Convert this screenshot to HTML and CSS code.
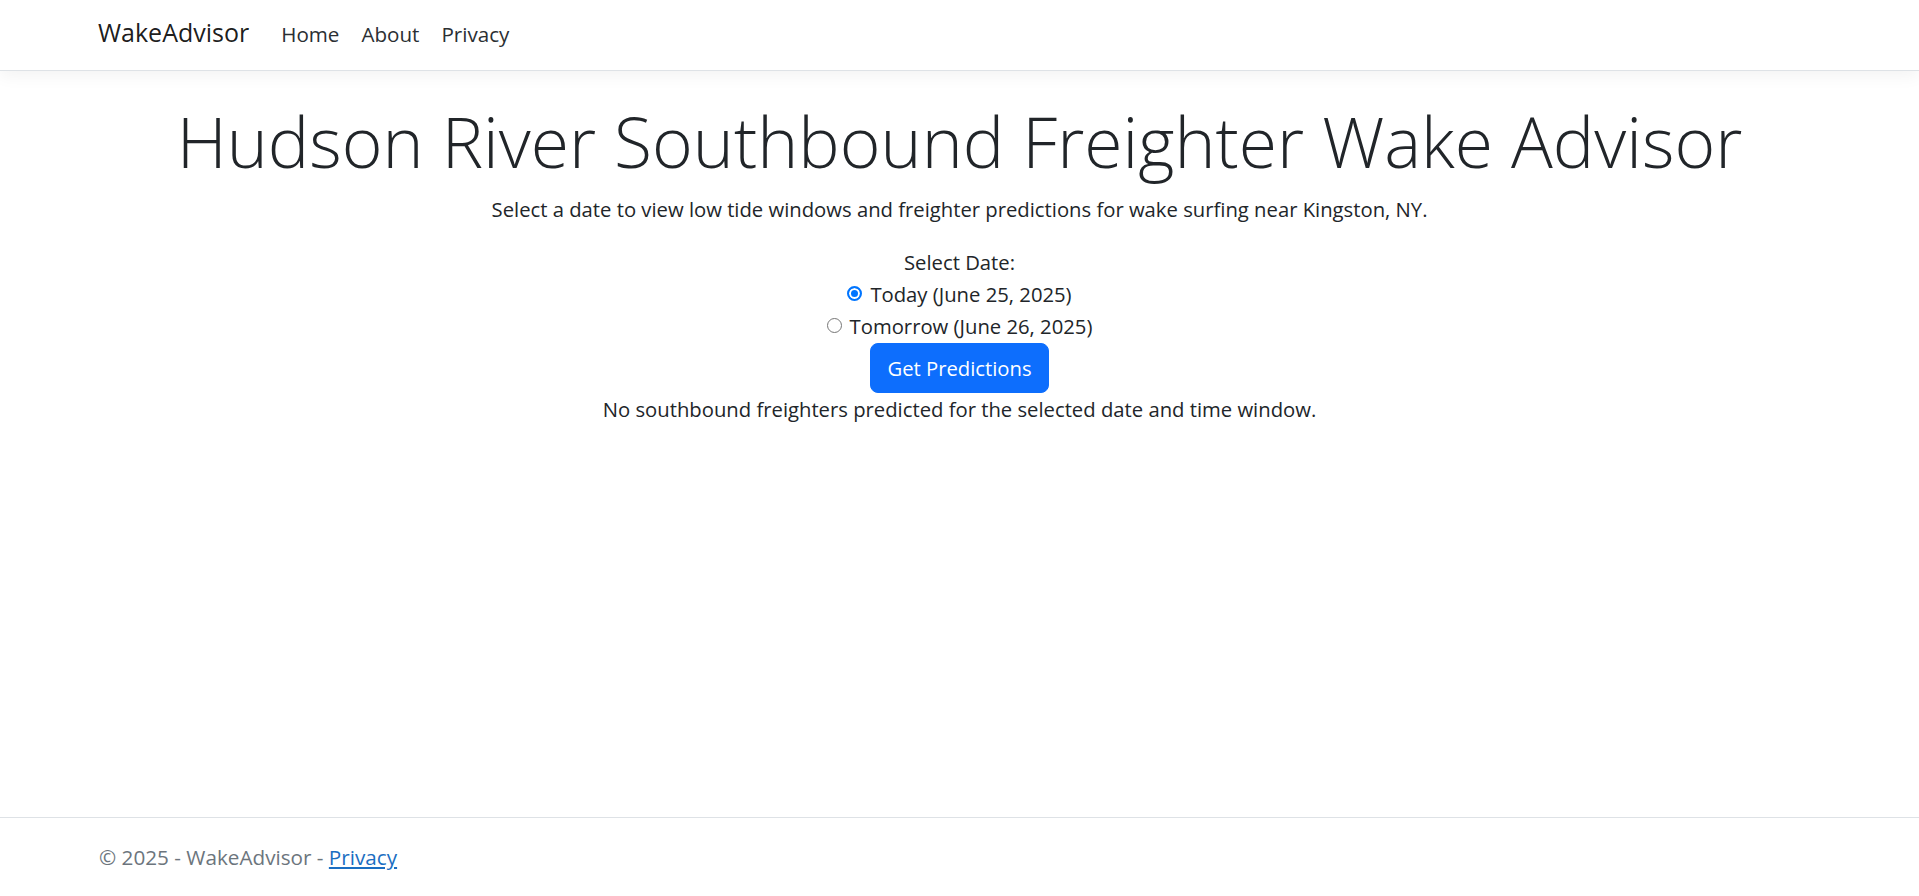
FILE: index.html
```html
<!DOCTYPE html>
<html lang="en">
<head>
<meta charset="utf-8">
<title>WakeAdvisor</title>
<link rel="stylesheet" href="styles.css">
</head>
<body>
<header class="site-header">
  <nav class="navbar">
    <a class="brand" href="#">WakeAdvisor</a>
    <ul class="nav-links">
      <li><a href="#">Home</a></li>
      <li><a href="#">About</a></li>
      <li><a href="#">Privacy</a></li>
    </ul>
  </nav>
</header>
<main class="main">
  <h1 class="title">Hudson River Southbound Freighter Wake Advisor</h1>
  <p class="lead">Select a date to view low tide windows and freighter predictions for wake surfing near Kingston, NY.</p>
  <form class="date-form">
    <div class="form-label">Select Date:</div>
    <div class="radio-row">
      <input type="radio" id="today" name="date" value="today" checked>
      <label for="today">Today (June 25, 2025)</label>
    </div>
    <div class="radio-row">
      <input type="radio" id="tomorrow" name="date" value="tomorrow">
      <label for="tomorrow">Tomorrow (June 26, 2025)</label>
    </div>
    <button type="button" class="btn-primary">Get Predictions</button>
  </form>
  <p class="result">No southbound freighters predicted for the selected date and time window.</p>
</main>
<footer class="site-footer">
  <div class="footer-inner">&copy; 2025 - WakeAdvisor - <a href="#">Privacy</a></div>
</footer>
</body>
</html>
```
FILE: styles.css
```css
* { box-sizing: border-box; }
html, body { margin: 0; padding: 0; }
body {
  font-family: "Open Sans", "Noto Sans", sans-serif;
  font-size: 20.25px;
  line-height: 32px;
  color: #212529;
  background: #fff;
  min-height: 100vh;
  display: flex;
  flex-direction: column;
}
.site-header {
  height: 71px;
  border-bottom: 1px solid #dee2e6;
  box-shadow: 0 5px 16px rgba(0, 0, 0, 0.05);
  background: #fff;
}
.navbar {
  display: flex;
  align-items: baseline;
  padding: 12px 0 0 98px;
}
.brand {
  font-size: 25px;
  line-height: 40px;
  color: rgba(0, 0, 0, 0.9);
  text-decoration: none;
  margin-right: 21px;
}
.nav-links {
  list-style: none;
  margin: 0;
  padding: 0;
  display: flex;
}
.nav-links a {
  display: block;
  padding: 0 11px;
  color: #2b2f33;
  text-decoration: none;
  font-size: 20.6px;
}
.main {
  flex: 1;
  text-align: center;
}
.title {
  font-weight: 300;
  font-size: 69.6px;
  line-height: 84px;
  margin: 28px 0 0;
}
.lead {
  margin: 10px 0 0;
}
.date-form {
  margin-top: 21px;
  display: flex;
  flex-direction: column;
  align-items: center;
}
.radio-row {
  display: flex;
  align-items: center;
}
.radio-row input {
  appearance: none;
  -webkit-appearance: none;
  width: 15px;
  height: 15px;
  margin: 0 8px 0 0;
  border: 1px solid #767676;
  border-radius: 50%;
  background: #fff;
  position: relative;
  top: -1px;
}
.radio-row input:checked {
  border: 2px solid #0075ff;
  background: #0075ff;
  box-shadow: inset 0 0 0 2px #fff;
}
.btn-primary {
  font-family: inherit;
  font-size: 20.25px;
  line-height: 32px;
  color: #fff;
  background: #0d6efd;
  border: 1px solid #0d6efd;
  border-radius: 8px;
  padding: 8px 16px;
  margin-top: 1px;
  cursor: pointer;
}
.result {
  margin: 0;
}
.site-footer {
  height: 79px;
  border-top: 1px solid #dee2e6;
  color: #6c757d;
  font-size: 20.7px;
  line-height: 78px;
  white-space: nowrap;
}
.footer-inner {
  padding-left: 99px;
}
.site-footer a {
  color: #1b6ec2;
}
```
